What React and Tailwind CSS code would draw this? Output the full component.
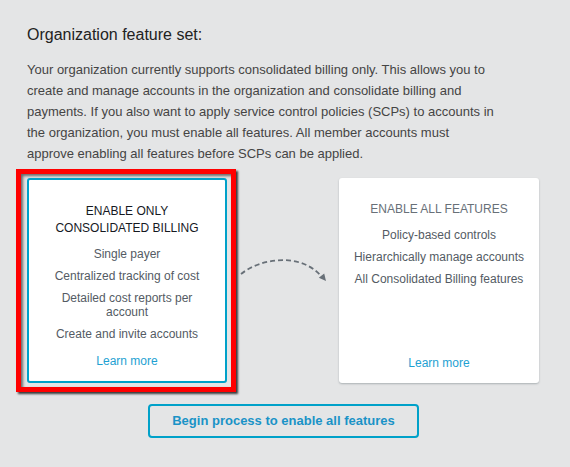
import React from "react";

const onlyBilling = [
  "Single payer",
  "Centralized tracking of cost",
  "Detailed cost reports per account",
  "Create and invite accounts",
];

const allFeatures = [
  "Policy-based controls",
  "Hierarchically manage accounts",
  "All Consolidated Billing features",
];

function FeatureCard({ title, items, selected }) {
  return (
    <div
      className={`flex flex-col items-center w-[200px] h-[205px] rounded-[3px] bg-white pt-[23px] pb-[13px] text-center ${
        selected
          ? "border-2 border-[#00a1c9]"
          : "shadow-[0_1px_2px_rgba(0,28,36,0.25)]"
      }`}
    >
      <div
        className={`px-4 text-[12px] leading-[17px] uppercase ${
          selected ? "text-[#16191f]" : "text-[#687078]"
        }`}
      >
        {title}
      </div>
      <ul className="mt-[10px] flex flex-col gap-[8px] px-[14px] text-[12px] leading-[14px] text-[#545b64]">
        {items.map((item) => (
          <li key={item}>{item}</li>
        ))}
      </ul>
      <a className="mt-auto text-[12px] leading-[14px] text-[#1ea1d2]" href="#">
        Learn more
      </a>
    </div>
  );
}

function DashedArrow() {
  return (
    <svg width="103" height="40" viewBox="0 0 103 40" className="mt-[81px] shrink-0">
      <path
        d="M5 24 C 25 8, 65 2, 86 27"
        fill="none"
        stroke="#687078"
        strokeWidth="1.8"
        strokeDasharray="5 3"
      />
      <polygon points="90,31 82.8,27.8 88.2,23.4" fill="#687078" />
    </svg>
  );
}

export default function App() {
  return (
    <div
      className="w-[570px] h-[467px] overflow-hidden bg-[#e4e5e6] px-[27px] pt-[23px]"
      style={{ fontFamily: '"Liberation Sans", Arial, sans-serif' }}
    >
      <h2 className="text-[16px] leading-[24px] text-[#222]">Organization feature set:</h2>
      <p className="mt-[12px] w-[467px] text-[13px] leading-[21px] text-[#444]">
        Your organization currently supports consolidated billing only. This allows you to
        create and manage accounts in the organization and consolidate billing and payments.
        If you also want to apply service control policies (SCPs) to accounts in the
        organization, you must enable all features. All member accounts must approve enabling
        all features before SCPs can be applied.
      </p>

      <div className="mt-[5px] -ml-[11px] flex items-start">
        <div className="border-[5px] border-[#ff0000] pl-[6px] pr-[4px] py-[4px] shadow-[2px_2px_2px_rgba(0,0,0,0.75),inset_2px_2px_3px_rgba(0,0,0,0.55)]">
          <FeatureCard title="Enable only consolidated billing" items={onlyBilling} selected />
        </div>
        <DashedArrow />
        <div className="mt-[9px]">
          <FeatureCard title="Enable all features" items={allFeatures} />
        </div>
      </div>

      <button className="mt-[12px] ml-[121px] w-[271px] h-[34px] rounded-[4px] border-2 border-[#00a1c9] text-[13px] font-bold text-[#1a93c7]">
        Begin process to enable all features
      </button>
    </div>
  );
}
